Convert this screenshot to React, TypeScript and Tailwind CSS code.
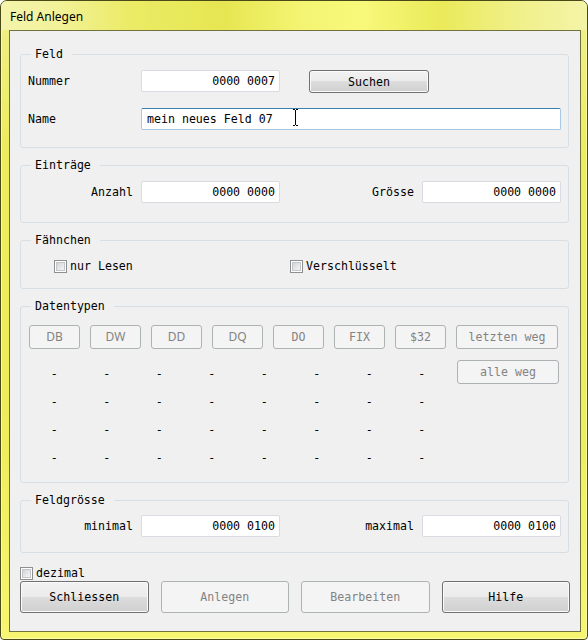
import type { ReactNode } from "react";

// Win7 style "Feld Anlegen" dialog, yellow aero frame

const MONO = "font-['DejaVu_Sans_Mono','Liberation_Mono',monospace] text-[11.6px] leading-[14px] text-black";

function Group({ title, className, children }: { title: string; className: string; children: ReactNode }) {
  return (
    <fieldset className={`mr-[1px] rounded-[3px] border border-[#d5dfe5] ${className}`}>
      <legend className="ml-[10px] pl-[4px] pr-[9px] leading-[14px]">{title}</legend>
      {children}
    </fieldset>
  );
}

function NumBox({ value }: { value: string }) {
  return (
    <div className="flex h-[22px] w-[139px] items-center justify-end rounded-[2px] border border-[#d8dce2] bg-white pr-[4px]">
      {value}
    </div>
  );
}

function Check({ label }: { label: string }) {
  return (
    <div className="flex h-[14px] items-center gap-[3px]">
      <div className="h-[13px] w-[13px] border border-[#8e8f8f] bg-white p-[1px]">
        <div className="h-full w-full border border-[#c2c5ca] bg-[linear-gradient(135deg,#d3d4d6,#f6f6f6)]" />
      </div>
      <span>{label}</span>
    </div>
  );
}

function Btn({ children, className }: { children: ReactNode; className: string }) {
  return (
    <div
      className={`flex items-center justify-center rounded-[3px] border border-[#707070] bg-[linear-gradient(#f2f2f2_0%,#ebebeb_50%,#dddddd_50%,#cfcfcf_100%)] shadow-[inset_0_0_0_1px_#fbfbfb] ${className}`}
    >
      {children}
    </div>
  );
}

function OffBtn({ children, className }: { children: ReactNode; className: string }) {
  return (
    <div
      className={`flex items-center justify-center rounded-[3px] border border-[#adb2b5] bg-[#f4f4f4] text-[#838383] ${className}`}
    >
      {children}
    </div>
  );
}

const dashes = Array.from({ length: 32 }, (_, i) => i);

export default function App() {
  return (
    <div className="h-[640px] w-[588px] overflow-hidden bg-white">
      <div className="flex h-[640px] w-[588px] flex-col rounded-t-[7px] rounded-b-[4px] border border-[#4a4a18] bg-[linear-gradient(180deg,#f0f08c_0%,#ecec5c_25%,#eeee5c_70%,#f6f672_100%)] shadow-[inset_0_0_0_1px_rgba(255,255,190,0.7)]">
        {/* title bar */}
        <div className="flex h-[29px] items-center rounded-t-[6px] bg-[linear-gradient(90deg,#f4f4ac_0%,#f2f29c_9%,#ebeb66_22%,#e6e652_38%,#f5f574_52%,#f8f87a_62%,#eaea5a_75%,#f0f08a_88%,#f4f4a8_100%)] pl-[9px] pt-[3px] font-['Noto_Sans',sans-serif] text-[12px] text-black">
          Feld Anlegen
        </div>

        <div className="flex flex-1 pb-[7px] pl-[8px] pr-[6px]">
          <div className={`flex flex-1 flex-col border border-[#727240] bg-[#f0f0f0] px-[10px] pt-[16px] ${MONO}`}>
            {/* Feld */}
            <Group title="Feld" className="">
              <div className="pb-[17px] pl-[7px] pt-[9px]">
                <div className="flex h-[23px] items-start">
                  <div className="flex h-[22px] w-[113px] items-center">Nummer</div>
                  <NumBox value="0000 0007" />
                  <Btn className="ml-[29px] h-[23px] w-[120px]">Suchen</Btn>
                </div>
                <div className="mt-[15px] flex">
                  <div className="flex h-[22px] w-[113px] items-center">Name</div>
                  <div className="relative flex h-[22px] w-[420px] items-center rounded-[2px] border border-[#a7c8e4] border-t-[#3c7fb1] bg-white pl-[5px]">
                    mein neues Feld 07
                    <svg className="absolute left-[151px] top-[0px]" width="6" height="18" viewBox="0 0 6 18" shapeRendering="crispEdges">
                      <rect x="0" y="0" width="2" height="1" fill="#000" />
                      <rect x="3" y="0" width="2" height="1" fill="#000" />
                      <rect x="2" y="1" width="1" height="15" fill="#000" />
                      <rect x="0" y="16" width="2" height="1" fill="#000" />
                      <rect x="3" y="16" width="2" height="1" fill="#000" />
                    </svg>
                  </div>
                </div>
              </div>
            </Group>

            {/* Einträge */}
            <Group title="Einträge" className="mt-[10px]">
              <div className="flex items-center pb-[19px] pl-[7px] pt-[9px]">
                <div className="w-[105px] text-right">Anzahl</div>
                <div className="ml-[8px]">
                  <NumBox value="0000 0000" />
                </div>
                <div className="w-[134px] text-right">Grösse</div>
                <div className="ml-[8px]">
                  <NumBox value="0000 0000" />
                </div>
              </div>
            </Group>

            {/* Fähnchen */}
            <Group title="Fähnchen" className="mt-[10px]">
              <div className="flex pb-[15px] pl-[33px] pt-[12px]">
                <div className="w-[236px]">
                  <Check label="nur Lesen" />
                </div>
                <Check label="Verschlüsselt" />
              </div>
            </Group>

            {/* Datentypen */}
            <Group title="Datentypen" className="mt-[10px]">
              <div className="pb-[10px] pl-[7px] pt-[12px]">
                <div className="ml-[1px] flex gap-[10px]">
                  <OffBtn className="h-[24px] w-[51px] font-['Noto_Sans',sans-serif] text-[12px]">DB</OffBtn>
                  <OffBtn className="h-[24px] w-[51px] font-['Noto_Sans',sans-serif] text-[12px]">DW</OffBtn>
                  <OffBtn className="h-[24px] w-[51px] font-['Noto_Sans',sans-serif] text-[12px]">DD</OffBtn>
                  <OffBtn className="h-[24px] w-[51px] font-['Noto_Sans',sans-serif] text-[12px]">DQ</OffBtn>
                  <OffBtn className="h-[24px] w-[51px]">DO</OffBtn>
                  <OffBtn className="h-[24px] w-[51px]">FIX</OffBtn>
                  <OffBtn className="h-[24px] w-[51px]">$32</OffBtn>
                  <OffBtn className="h-[24px] w-[102px]">letzten weg</OffBtn>
                </div>
                <div className="mt-[11px] flex items-start">
                  <div className="grid w-[420px] grid-cols-8">
                    {dashes.map((i) => (
                      <div key={i} className="flex h-[28px] items-center justify-center">
                        -
                      </div>
                    ))}
                  </div>
                  <OffBtn className="ml-[9px] h-[24px] w-[102px]">alle weg</OffBtn>
                </div>
              </div>
            </Group>

            {/* Feldgrösse */}
            <Group title="Feldgrösse" className="mt-[10px]">
              <div className="flex items-center pb-[15px] pl-[7px] pt-[8px]">
                <div className="w-[105px] text-right">minimal</div>
                <div className="ml-[8px]">
                  <NumBox value="0000 0100" />
                </div>
                <div className="w-[134px] text-right">maximal</div>
                <div className="ml-[8px]">
                  <NumBox value="0000 0100" />
                </div>
              </div>
            </Group>

            <div className="mt-[13px]">
              <Check label="dezimal" />
            </div>

            <div className="mt-[1px] flex gap-[12px]">
              <Btn className="h-[32px] flex-1">Schliessen</Btn>
              <OffBtn className="h-[32px] flex-1">Anlegen</OffBtn>
              <OffBtn className="h-[32px] flex-1">Bearbeiten</OffBtn>
              <Btn className="h-[32px] flex-1">Hilfe</Btn>
            </div>
          </div>
        </div>
      </div>
    </div>
  );
}
